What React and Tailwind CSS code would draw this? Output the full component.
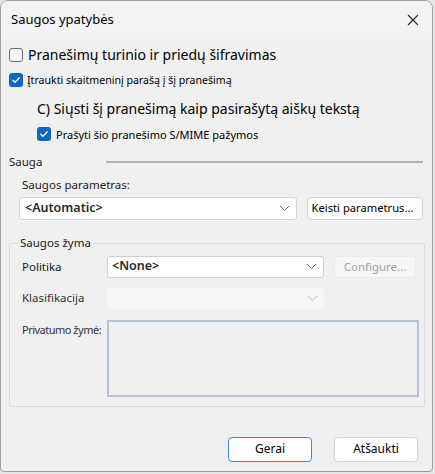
import React from "react";

const font = { fontFamily: '"Noto Sans", "Segoe UI", sans-serif' };

const Check = ({ checked }) =>
  checked ? (
    <span className="w-[14px] h-[14px] rounded-[3px] bg-[#0f67c0] flex items-center justify-center shrink-0">
      <svg width="10" height="10" viewBox="0 0 10 10" fill="none">
        <path d="M1.8 5.2 L4 7.3 L8.3 2.8" stroke="#fff" strokeWidth="1.3" strokeLinecap="round" strokeLinejoin="round" />
      </svg>
    </span>
  ) : (
    <span className="w-[14px] h-[14px] rounded-[3px] border border-[#6d6d6d] bg-[#f6f6f6] shrink-0" />
  );

const Chevron = ({ color = "#6a6a6a" }) => (
  <svg width="11" height="7" viewBox="0 0 11 7" fill="none">
    <path d="M1 1 L5.5 5.5 L10 1" stroke={color} strokeWidth="1" />
  </svg>
);

export default function App() {
  return (
    <div className="w-[435px] h-[474px] bg-[#e6e6e6] text-[#1a1a1a]" style={font}>
      <div className="w-[433px] h-[472px] rounded-t-[8px] rounded-b-[4px] border border-[#9e9e9e] bg-[#f0f0f0] overflow-hidden flex flex-col">
        {/* title bar */}
        <div className="h-[38px] bg-[#f3f3f3] flex items-center justify-between pl-[10px] pr-[13px]">
          <span className="text-[13px] text-black">Saugos ypatybės</span>
          <svg width="12" height="12" viewBox="0 0 12 12">
            <path d="M1 1 L11 11 M11 1 L1 11" stroke="#222" strokeWidth="1.1" />
          </svg>
        </div>

        <div className="flex flex-col px-[8px]">
          <label className="flex items-center gap-[5px] mt-[8px] h-[16px]">
            <Check />
            <span className="text-[14px] text-black leading-none">Pranešimų turinio ir priedų šifravimas</span>
          </label>
          <label className="flex items-center gap-[4px] mt-[10px] h-[14px]">
            <Check checked />
            <span className="text-[10.6px] text-black leading-none">Įtraukti skaitmeninį parašą į šį pranešimą</span>
          </label>
          <div className="pl-[28px] mt-[13px] h-[18px] flex items-center text-[14px] text-black leading-none">
            C) Siųsti šį pranešimą kaip pasirašytą aiškų tekstą
          </div>
          <label className="flex items-center gap-[5px] pl-[28px] mt-[8px] h-[16px]">
            <Check checked />
            <span className="text-[11px] text-black leading-none">Prašyti šio pranešimo S/MIME pažymos</span>
          </label>

          {/* Sauga */}
          <div className="flex items-center mt-[12px] h-[16px]">
            <span className="text-[11.5px] w-[97px] leading-none">Sauga</span>
            <div className="flex-1 mr-[1px] h-[2px] bg-[#b4b4b4]" />
          </div>
          <div className="pl-[13px] mt-[9px] text-[11.5px] leading-none">Saugos parametras:</div>
          <div className="flex items-center gap-[10px] pl-[10px] mt-[6px] pr-[1px]">
            <div className="w-[279px] h-[23px] bg-white border border-[#d4d4d4] rounded-[3px] flex items-center justify-between pl-[5px] pr-[6px]">
              <span className="text-[12.5px] font-semibold text-[#2a2a2a]">&lt;Automatic&gt;</span>
              <Chevron />
            </div>
            <div className="w-[117px] h-[23px] bg-[#fdfdfd] border border-[#d4d4d4] rounded-[4px] flex items-center pl-[4px] text-[11.2px] text-black whitespace-nowrap">
              Keisti parametrus...
            </div>
          </div>

          {/* Saugos žyma group */}
          <div className="relative mt-[23px] mr-[-1px] h-[164px] border border-[#dcdcdc] rounded-[2px] pt-[12px]">
            <span className="absolute left-[8px] top-[-9px] px-[2px] bg-[#f0f0f0] text-[11.5px] leading-[16px]">Saugos žyma</span>
            <div className="flex items-center h-[22px]">
              <span className="w-[97px] pl-[12px] text-[11.5px]">Politika</span>
              <div className="w-[217px] h-[22px] bg-white border border-[#cfcfcf] rounded-[3px] flex items-center justify-between pl-[4px] pr-[6px]">
                <span className="text-[12.5px] font-semibold text-[#2a2a2a]">&lt;None&gt;</span>
                <Chevron />
              </div>
              <div className="ml-[10px] w-[82px] h-[22px] bg-[#f6f6f6] border border-[#ebebeb] rounded-[4px] flex items-center justify-center text-[11.5px] text-[#a2a2a2]">
                Configure...
              </div>
            </div>
            <div className="flex items-center h-[21px] mt-[10px]">
              <span className="w-[97px] pl-[12px] text-[11.5px] text-[#333]">Klasifikacija</span>
              <div className="w-[217px] h-[21px] bg-[#f6f6f6] rounded-[3px] flex items-center justify-end pr-[6px]">
                <Chevron color="#c4c4c4" />
              </div>
            </div>
            <div className="flex items-start mt-[11px]">
              <span className="w-[97px] pl-[12px] text-[11px] text-[#333] mt-[2px] whitespace-nowrap tracking-[-0.5px]">Privatumo žymė:</span>
              <div className="w-[312px] h-[77px] border-2 border-[#b4c2d2] bg-[#f0f0f0]" />
            </div>
          </div>
        </div>

        {/* buttons */}
        <div className="flex justify-end gap-[22px] mt-[30px] pr-[14px]">
          <button className="w-[84px] h-[25px] bg-white border-[1.5px] border-[#3a8ad6] rounded-[4px] text-[12px] text-black">Gerai</button>
          <button className="w-[84px] h-[25px] bg-white border border-[#d6d6d6] rounded-[4px] text-[12px] text-black">Atšaukti</button>
        </div>
      </div>
    </div>
  );
}
